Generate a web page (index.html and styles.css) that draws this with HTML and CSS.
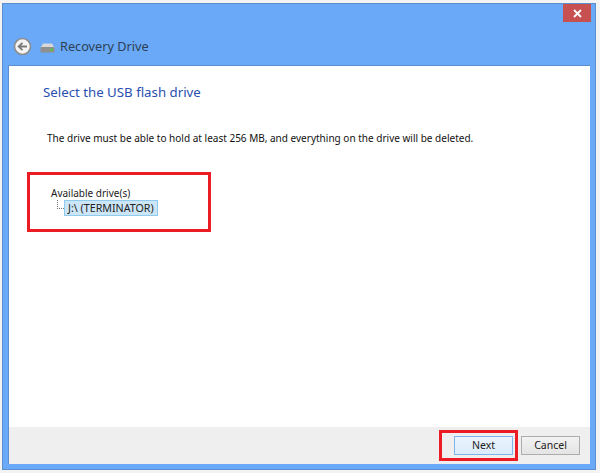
FILE: index.html
```html
<!DOCTYPE html>
<html lang="en">
<head>
<meta charset="utf-8">
<title>Recovery Drive</title>
<link rel="stylesheet" href="styles.css">
</head>
<body>
<div class="window">
  <div class="titlebar">
    <div class="caption">
      <button class="close" aria-label="Close">
        <svg width="9" height="9" viewBox="0 0 9 9"><path d="M1 1L8 8M8 1L1 8" stroke="#fff" stroke-width="1.8" fill="none"/></svg>
      </button>
    </div>
    <div class="nav">
      <svg class="back" width="19" height="19" viewBox="0 0 19 19">
        <circle cx="9.5" cy="9.5" r="8" fill="#f4f4f4" stroke="#8d8d8d" stroke-width="1.6"/>
        <path d="M14 9.5H6M9.5 5.8L5.6 9.5L9.5 13.2" fill="none" stroke="#7a7a7a" stroke-width="1.8"/>
      </svg>
      <svg class="drive" width="15" height="10" viewBox="0 0 15 10">
        <path d="M3 0.5H12L14.5 5H0.5Z" fill="#d8d8d8"/>
        <rect x="0.5" y="4" width="14" height="5.5" rx="1" fill="#8f8f8f"/>
        <rect x="10" y="5.5" width="3" height="2.5" fill="#5cc04a"/>
      </svg>
      <span class="title">Recovery Drive</span>
    </div>
  </div>
  <div class="client">
    <main class="content">
      <h1 class="heading">Select the USB flash drive</h1>
      <p class="desc">The drive must be able to hold at least 256 MB, and everything on the drive will be deleted.</p>
      <div class="tree">
        <div class="tree-root">Available drive(s)</div>
        <div class="tree-row">
          <span class="tree-line"></span>
          <span class="tree-item">J:\ (TERMINATOR)</span>
        </div>
      </div>
    </main>
    <footer class="footer">
      <button class="btn btn-primary">Next</button>
      <button class="btn">Cancel</button>
    </footer>
  </div>
  <div class="mark mark-tree"></div>
  <div class="mark mark-next"></div>
</div>
</body>
</html>
```
FILE: styles.css
```css
* { box-sizing: border-box; }
html, body { margin: 0; height: 100%; background: #f3f3f3; overflow: hidden; }
body { padding: 3px 4px 3px 2px; font-family: "Noto Sans", "Open Sans", sans-serif; }
.window {
  position: relative;
  height: 467px;
  background: #69a9f7;
  border: 1px solid #5b8fd0;
  display: flex;
  flex-direction: column;
  padding: 0 5px 5px;
}
.titlebar { height: 61px; flex: none; display: flex; flex-direction: column; }
.caption { display: flex; justify-content: flex-end; }
.close {
  width: 28px; height: 18px; margin-right: -1px;
  border: 0; padding: 0;
  background: #c75050;
  display: flex; align-items: center; justify-content: center;
}
.nav { display: flex; align-items: center; margin-top: 15px; padding-left: 5px; }
.back { flex: none; }
.drive { flex: none; margin-left: 8px; margin-top: 2px; }
.title { margin: -2px 0 0 5px; font-size: 12.7px; line-height: 18px; color: #2d3f55; }
.client {
  flex: 1; min-height: 0;
  background: #fff;
  border: 1px solid #5b8fd0;
  border-width: 1px 0 0 1px;
  display: flex; flex-direction: column;
}
.content { flex: 1; padding: 16px 0 0 34px; }
.heading { margin: 0; font-size: 13.25px; line-height: 20px; font-weight: 400; color: #2a4fb0; }
.desc { margin: 29px 0 0 4px; font-size: 10.03px; line-height: 14px; color: #111; }
.tree { margin: 41px 0 0 8px; }
.tree-root { font-size: 10px; line-height: 14px; color: #222; }
.tree-row { display: flex; align-items: flex-start; padding-left: 6px; }
.tree-line {
  width: 7px; height: 9px;
  border-left: 1px dotted #777;
  border-bottom: 1px dotted #777;
}
.tree-item {
  font-size: 10.7px; line-height: 14px; padding: 0 3px;
  background: #cde6f7;
  border: 1px solid #8fcbef;
  color: #222;
}
.footer {
  height: 37px; flex: none;
  background: #efefef;
  display: flex; justify-content: flex-end; align-items: flex-start;
  gap: 8px; padding: 9px 10px 0 0;
}
.btn {
  width: 59px; height: 19px; padding: 0;
  font: 10.5px/17px "Noto Sans", "Open Sans", sans-serif;
  color: #222;
  background: linear-gradient(#f2f2f2, #e4e4e4);
  border: 1px solid #adadad;
}
.btn-primary {
  background: linear-gradient(#eaf4fd, #dcecfb);
  border-color: #7eb4ea;
}
.mark { position: absolute; border: 3px solid #ec1c24; }
.mark-tree { left: 24px; top: 168px; width: 184px; height: 60px; }
.mark-next { left: 436px; top: 426px; width: 79px; height: 31px; }
```
